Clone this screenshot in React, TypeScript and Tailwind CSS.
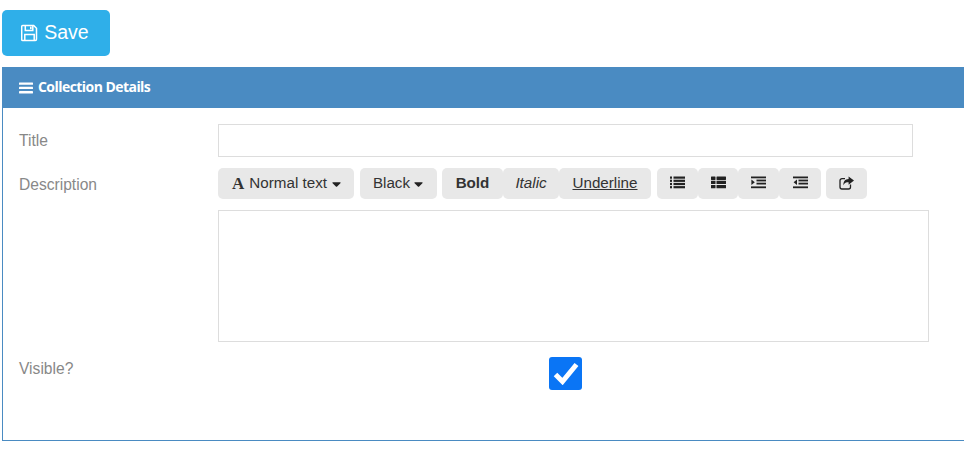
import React from "react";
import { FaCaretDown } from "react-icons/fa";

const btn = "h-[31px] bg-[#e8e8e8] rounded-[5px] flex items-center justify-center text-[15.2px] text-[#333]";

function ListIcon() {
  return (
    <svg width="15" height="13" viewBox="0 0 15 13" fill="#222">
      {[0.5, 3.7, 6.9, 10.1].map((y) => (
        <g key={y}>
          <rect x="0" y={y} width="2" height="2.2" />
          <rect x="3.5" y={y} width="11.5" height="2.2" />
        </g>
      ))}
    </svg>
  );
}

function ThListIcon() {
  return (
    <svg width="15" height="13" viewBox="0 0 15 13" fill="#222">
      {[0.5, 4.7, 8.9].map((y) => (
        <g key={y}>
          <rect x="0" y={y} width="4.5" height="3.4" rx="0.4" />
          <rect x="5.5" y={y} width="9.5" height="3.4" rx="0.4" />
        </g>
      ))}
    </svg>
  );
}

function IndentIcon({ out }: { out?: boolean }) {
  return (
    <svg width="15" height="13" viewBox="0 0 15 13" fill="#222">
      <rect x="0" y="0.5" width="15" height="1.8" />
      <rect x="5.5" y="3.6" width="9.5" height="1.8" />
      <rect x="5.5" y="6.7" width="9.5" height="1.8" />
      <rect x="0" y="10.4" width="15" height="1.8" />
      <path d={out ? "M4 3.5v5.6L0.6 6.3z" : "M0.4 3.5v5.6L3.8 6.3z"} />
    </svg>
  );
}

function ShareIcon() {
  return (
    <svg width="15" height="14" viewBox="0 0 15 14">
      <path d="M6 2.6H3a2 2 0 0 0-2 2v6.4a2 2 0 0 0 2 2h6.5a2 2 0 0 0 2-2V8.6" fill="none" stroke="#222" strokeWidth="1.3" />
      <path d="M9.6 0.4 15 4.6 9.6 8.8V6.2C7.2 6.2 5.4 6.7 4.4 9.2 4.2 5.6 6 3.2 9.6 3z" fill="#222" />
    </svg>
  );
}

function SaveIcon() {
  return (
    <svg width="17" height="18" viewBox="0 0 17 18" fill="none" stroke="#fff" strokeWidth="1.5">
      <path d="M1.7 1.5h11l2.8 2.8v11a1.2 1.2 0 0 1-1.2 1.2H1.7a1 1 0 0 1-1-1V2.5a1 1 0 0 1 1-1z" />
      <path d="M4.3 1.5v5h7.5v-5" />
      <path d="M3.8 16.5v-6h9.4v6" />
      <rect x="9" y="2.6" width="1.6" height="2.6" fill="#fff" stroke="none" />
    </svg>
  );
}

function BarsIcon() {
  return (
    <svg width="14" height="12" viewBox="0 0 14 12" fill="#fff">
      <rect x="0" y="0.5" width="14" height="2.3" rx="0.4" />
      <rect x="0" y="4.8" width="14" height="2.3" rx="0.4" />
      <rect x="0" y="9.1" width="14" height="2.3" rx="0.4" />
    </svg>
  );
}

function CheckIcon() {
  return (
    <svg width="26" height="23" viewBox="0 0 26 23" fill="none" stroke="#fff" strokeWidth="5">
      <path d="M2.5 12.5 9.5 19.5 23.5 2.5" />
    </svg>
  );
}

export default function App() {
  return (
    <div className="w-[964px] h-[451px] overflow-hidden bg-white pl-[2px] pt-[10px] font-['Liberation_Sans',Arial,sans-serif]">
      <button className="w-[108px] h-[46px] rounded-[5px] bg-[#2fafe9] text-white text-[19.5px] flex items-center justify-center gap-[6px] pr-[2px]">
        <SaveIcon />
        <span>Save</span>
      </button>
      <div className="mt-[11px] w-[1000px] h-[374px] border border-[#4a8bc2] border-t-0">
        <div className="h-[41px] -ml-px bg-[#4a8bc2] text-white flex items-center pl-[17px] gap-[5px] font-['Open_Sans',sans-serif] font-bold text-[14px] tracking-[-0.55px]">
          <BarsIcon />
          <span className="-mt-[2px]">Collection Details</span>
        </div>
        <div className="pl-[16px] text-[15.6px] text-[#888]">
          <div className="flex pt-[16px]">
            <div className="w-[199px] pt-[5px]">Title</div>
            <div className="w-[695px] h-[33px] border border-[#ddd]" />
          </div>
          <div className="flex pt-[11px]">
            <div className="w-[199px] pt-[5px]">Description</div>
            <div>
              <div className="flex">
                <div className={`${btn} w-[136px] gap-[5px] pl-[2px]`}>
                  <span className="font-['Liberation_Serif',serif] font-bold text-[17px] text-[#333] leading-none">A</span>
                  <span>Normal text</span>
                  <FaCaretDown className="w-[11px] h-[14px] -ml-[1px] text-[#222]" />
                </div>
                <div className={`${btn} w-[77px] ml-[6px] gap-[3px]`}>
                  <span>Black</span>
                  <FaCaretDown className="w-[11px] h-[14px] text-[#222]" />
                </div>
                <div className={`${btn} w-[61px] ml-[5px] font-bold`}>Bold</div>
                <div className={`${btn} w-[56px] italic`}>Italic</div>
                <div className={`${btn} w-[92px] underline`}>Underline</div>
                <div className={`${btn} w-[41px] ml-[6px] pb-[2px]`}><ListIcon /></div>
                <div className={`${btn} w-[40px] pb-[2px]`}><ThListIcon /></div>
                <div className={`${btn} w-[41px] pb-[2px]`}><IndentIcon /></div>
                <div className={`${btn} w-[42px] pb-[2px]`}><IndentIcon out /></div>
                <div className={`${btn} w-[41px] ml-[5px] pb-[2px]`}><ShareIcon /></div>
              </div>
              <div className="mt-[11px] w-[711px] h-[132px] border border-[#ddd]" />
            </div>
          </div>
          <div className="flex pt-[15px]">
            <div className="w-[530px]">Visible?</div>
            <div className="w-[33px] h-[33px] rounded-[3px] bg-[#0a75f5] flex items-center justify-center">
              <CheckIcon />
            </div>
          </div>
        </div>
      </div>
    </div>
  );
}
